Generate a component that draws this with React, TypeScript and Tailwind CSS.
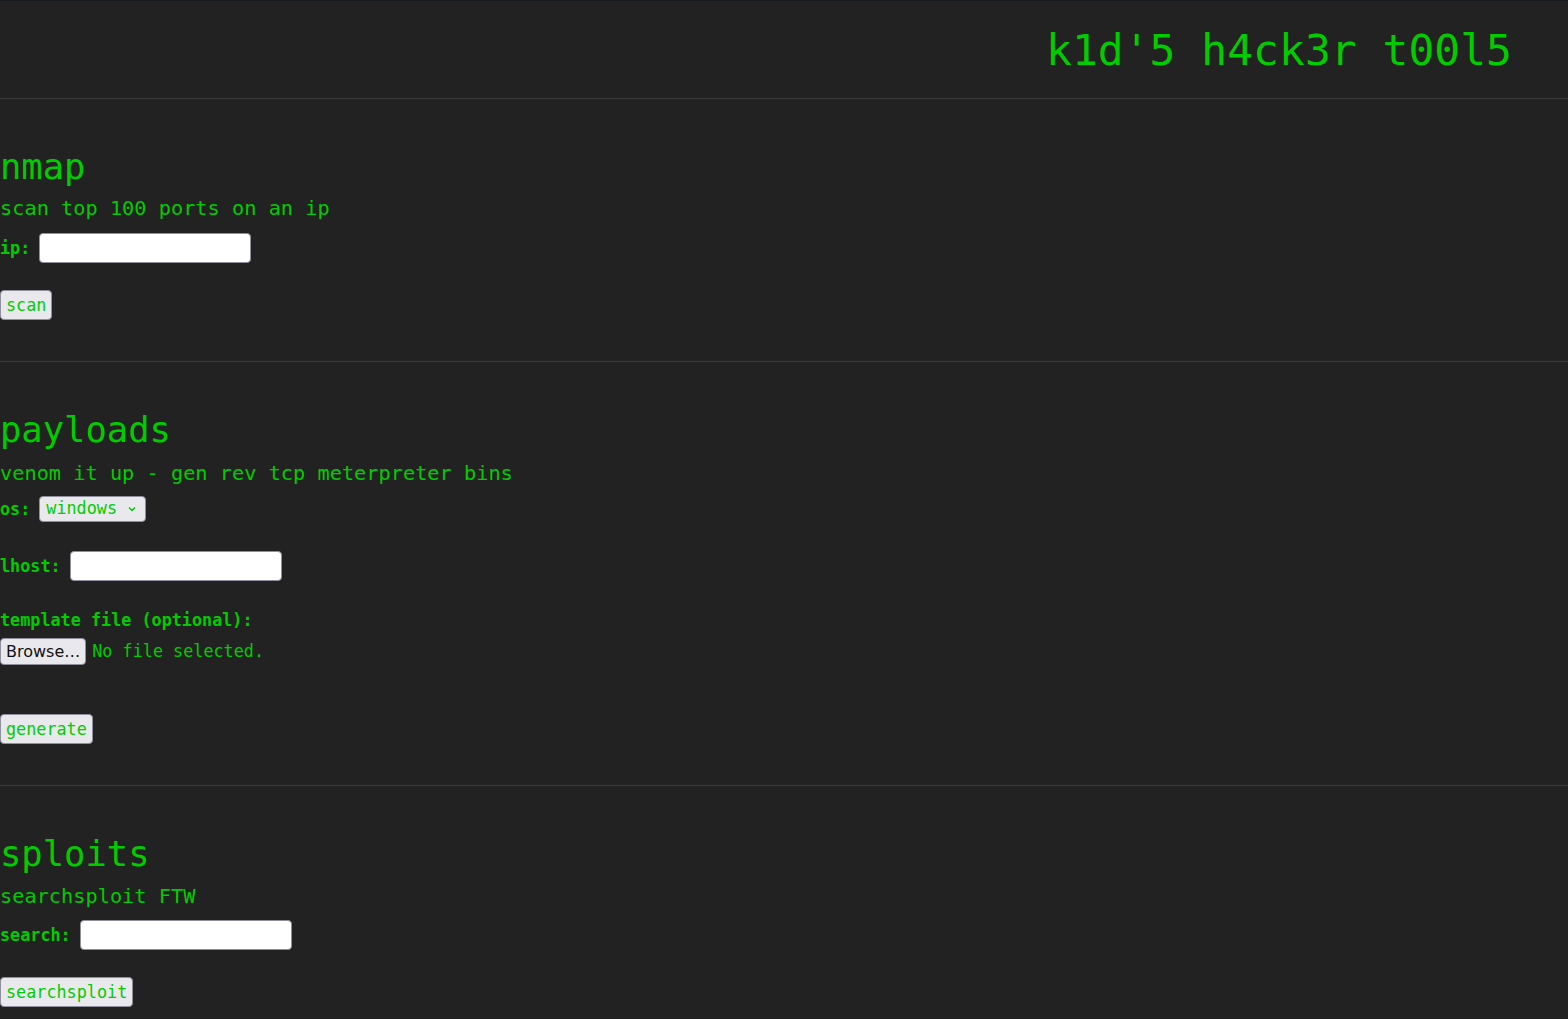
import React from "react";

const mono = "font-['DejaVu_Sans_Mono',monospace]";
const btn =
  "rounded-[4px] border border-[#8f8f9d] bg-[#e9e9ed] px-[5px] py-[4px] text-[16.8px] leading-[20px] text-[#00cc00]";
const field =
  "h-[30px] w-[212px] rounded-[4px] border border-[#8f8f9d] bg-white px-1 text-[16px] text-black outline-none";

function Field({ label }: { label: string }) {
  return (
    <div className="flex items-center gap-[9px]">
      <label className="text-[16.8px] font-bold leading-[20px]">{label}</label>
      <input type="text" className={field} />
    </div>
  );
}

function Heading({ title, blurb, gap }: { title: string; blurb: string; gap: string }) {
  return (
    <>
      <h2 className="text-[35.5px] leading-[42px]">{title}</h2>
      <p className={`${gap} text-[20.3px] leading-[24px]`}>{blurb}</p>
    </>
  );
}

export default function App() {
  return (
    <div className={`min-h-screen border-t border-[#16191d] bg-[#222222] text-[#00cc00] ${mono}`}>
      <header className="flex h-[98px] items-center justify-end border-b border-[#3a3a3a] pr-[56px]">
        <h1 className="text-[43px] leading-[50px]">k1d'5 h4ck3r t00l5</h1>
      </header>

      <section className="border-b border-[#3a3a3a] pt-[47px] pb-[41px]">
        <Heading title="nmap" blurb="scan top 100 ports on an ip" gap="mt-[8px]" />
        <div className="mt-[13px]">
          <Field label="ip:" />
        </div>
        <button className={`mt-[27px] ${btn}`}>scan</button>
      </section>

      <section className="border-b border-[#3a3a3a] pt-[47px] pb-[41px]">
        <Heading title="payloads" blurb="venom it up - gen rev tcp meterpreter bins" gap="mt-[10px]" />
        <div className="mt-[11px] flex items-center gap-[9px]">
          <label className="text-[16.8px] font-bold leading-[20px]">os:</label>
          <div className="flex h-[26px] w-[107px] items-center justify-between rounded-[4px] border border-[#8f8f9d] bg-[#e9e9ed] pl-[6px] pr-[7px] text-[16.8px]">
            <span>windows</span>
            <svg viewBox="0 0 12 12" className="h-3 w-3" fill="none" stroke="currentColor" strokeWidth="1.5">
              <path d="M3 4.5 6 7.5 9 4.5" />
            </svg>
          </div>
        </div>
        <div className="mt-[29px]">
          <Field label="lhost:" />
        </div>
        <p className="mt-[29px] text-[16.8px] font-bold leading-[20px]">template file (optional):</p>
        <div className="mt-[8px] flex items-center gap-[6px]">
          <button className="h-[27px] rounded-[4px] border border-[#8f8f9d] bg-[#e9e9ed] px-[5px] font-['DejaVu_Sans',sans-serif] text-[16px] text-[#111]">
            Browse…
          </button>
          <span className="text-[16.8px]">No file selected.</span>
        </div>
        <button className={`mt-[49px] ${btn}`}>generate</button>
      </section>

      <section className="pt-[47px] pb-[12px]">
        <Heading title="sploits" blurb="searchsploit FTW" gap="mt-[9px]" />
        <div className="mt-[12px]">
          <Field label="search:" />
        </div>
        <button className={`mt-[27px] ${btn}`}>searchsploit</button>
      </section>
    </div>
  );
}
